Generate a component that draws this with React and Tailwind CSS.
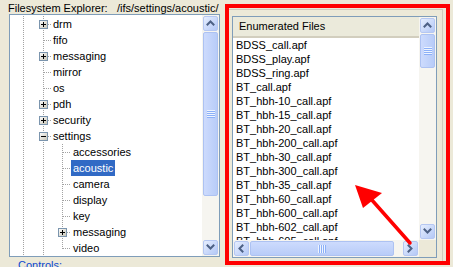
import React from "react";

const treeRows = [
  { t: "drm", lvl: 2, exp: "+" },
  { t: "fifo", lvl: 2 },
  { t: "messaging", lvl: 2, exp: "+" },
  { t: "mirror", lvl: 2 },
  { t: "os", lvl: 2 },
  { t: "pdh", lvl: 2, exp: "+" },
  { t: "security", lvl: 2, exp: "+" },
  { t: "settings", lvl: 2, exp: "-" },
  { t: "accessories", lvl: 3 },
  { t: "acoustic", lvl: 3, sel: true },
  { t: "camera", lvl: 3 },
  { t: "display", lvl: 3 },
  { t: "key", lvl: 3 },
  { t: "messaging", lvl: 3, exp: "+" },
  { t: "video", lvl: 3, last: true },
];

const files = [
  "BDSS_call.apf",
  "BDSS_play.apf",
  "BDSS_ring.apf",
  "BT_call.apf",
  "BT_hbh-10_call.apf",
  "BT_hbh-15_call.apf",
  "BT_hbh-20_call.apf",
  "BT_hbh-200_call.apf",
  "BT_hbh-30_call.apf",
  "BT_hbh-300_call.apf",
  "BT_hbh-35_call.apf",
  "BT_hbh-60_call.apf",
  "BT_hbh-600_call.apf",
  "BT_hbh-602_call.apf",
  "BT_hbh-605_call.apf",
];

const DOT = "#a3a3a3";

function VLine({ x, y1 = 0, y2 = 16 }) {
  return (
    <line x1={x + 0.5} x2={x + 0.5} y1={y1} y2={y2} stroke={DOT} strokeDasharray="1 1" />
  );
}
function HLine({ x1, x2, y = 8 }) {
  return (
    <line x1={x1} x2={x2} y1={y + 0.5} y2={y + 0.5} stroke={DOT} strokeDasharray="1 1" />
  );
}
function ExpBox({ cx, sign }) {
  return (
    <g>
      <defs>
        <linearGradient id="bx" x1="0" y1="0" x2="1" y2="1">
          <stop offset="0" stopColor="#ffffff" />
          <stop offset="1" stopColor="#c6c3b4" />
        </linearGradient>
      </defs>
      <rect x={cx - 4 + 0.5} y={4.5} width={8} height={8} fill="url(#bx)" stroke="#7b95ae" />
      <line x1={cx - 2} x2={cx + 3} y1={8.5} y2={8.5} stroke="#000" />
      {sign === "+" && <line x1={cx + 0.5} x2={cx + 0.5} y1={6} y2={11} stroke="#000" />}
    </g>
  );
}

function TreeRow({ r }) {
  const w = r.lvl === 2 ? 41 : 61;
  return (
    <div className="flex h-[16px] items-center whitespace-nowrap">
      <svg width={w} height={16} shapeRendering="crispEdges" className="shrink-0">
        <VLine x={13} />
        <VLine x={33} />
        {r.lvl === 2 && !r.exp && <HLine x1={34} x2={41} />}
        {r.lvl === 2 && r.exp && (
          <>
            <HLine x1={38} x2={41} />
            <ExpBox cx={33} sign={r.exp} />
          </>
        )}
        {r.lvl === 3 && <VLine x={52} y1={0} y2={r.last ? 9 : 16} />}
        {r.lvl === 3 && !r.exp && <HLine x1={53} x2={61} />}
        {r.lvl === 3 && r.exp && (
          <>
            <HLine x1={57} x2={61} />
            <ExpBox cx={52} sign={r.exp} />
          </>
        )}
      </svg>
      <span
        className={
          "flex h-[16px] items-center px-[2px] " +
          (r.sel ? "bg-[#316ac5] text-white" : "text-black")
        }
      >
        {r.t}
      </span>
    </div>
  );
}

function Chevron({ dir }) {
  const pts = {
    up: "1.5,5.5 4.5,2.5 7.5,5.5",
    down: "1.5,2.5 4.5,5.5 7.5,2.5",
    left: "5.5,1.5 2.5,4.5 5.5,7.5",
    right: "2.5,1.5 5.5,4.5 2.5,7.5",
  }[dir];
  return (
    <svg width="9" height="9" viewBox="0 0 9 9">
      <polyline points={pts} fill="none" stroke="#4d6185" strokeWidth="2" strokeLinecap="square" />
    </svg>
  );
}

function ScrollBtn({ dir }) {
  return (
    <div className="h-[17px] w-[17px] shrink-0 p-[1px]">
      <div className="flex h-full w-full items-center justify-center rounded-[2px] border border-[#b5c7f2] bg-gradient-to-br from-[#e6eefe] to-[#b4c8f6]">
        <Chevron dir={dir} />
      </div>
    </div>
  );
}

function Grip({ vertical }) {
  return vertical ? (
    <svg width="8" height="8" shapeRendering="crispEdges">
      {[0, 2, 4, 6].map((y) => (
        <g key={y}>
          <line x1="0" x2="8" y1={y + 0.5} y2={y + 0.5} stroke="#eef4fe" />
          <line x1="0" x2="8" y1={y + 1.5} y2={y + 1.5} stroke="#8cb0f8" />
        </g>
      ))}
    </svg>
  ) : (
    <svg width="8" height="8" shapeRendering="crispEdges">
      {[0, 2, 4, 6].map((x) => (
        <g key={x}>
          <line y1="0" y2="8" x1={x + 0.5} x2={x + 0.5} stroke="#eef4fe" />
          <line y1="0" y2="8" x1={x + 1.5} x2={x + 1.5} stroke="#8cb0f8" />
        </g>
      ))}
    </svg>
  );
}

export default function App() {
  return (
    <div className="relative flex h-[267px] w-[453px] overflow-hidden bg-[#ece9d8] font-['Liberation_Sans',Arial,sans-serif] text-[11px] leading-none text-black">
      {/* Left column */}
      <div className="flex w-[225px] shrink-0 flex-col">
        <div className="flex h-[16px] items-start whitespace-nowrap pl-[8px] pt-[2px] leading-[12px]">
          <span className="w-[109px] shrink-0">Filesystem Explorer:</span>
          <span>/ifs/settings/acoustic/</span>
        </div>
        <div className="ml-[9px] flex h-[243px] w-[211px] border border-[#7f9db9] bg-white">
          <div className="flex-1 overflow-hidden pt-[1px]">
            {treeRows.map((r, i) => (
              <TreeRow key={i} r={r} />
            ))}
          </div>
          <div className="flex w-[17px] shrink-0 flex-col bg-[#f6f5f0]">
            <ScrollBtn dir="up" />
            <div className="h-[164px] px-[1px]">
              <div className="flex h-full w-full items-center justify-center rounded-[2px] border border-[#adc2f2] bg-gradient-to-r from-[#cddbfd] to-[#b8ccf8]">
                <Grip vertical />
              </div>
            </div>
            <div className="flex-1" />
            <ScrollBtn dir="down" />
          </div>
        </div>
        <div className="pl-[18px] pt-[2px] leading-[12px] text-[#0a48d1]">Controls:</div>
      </div>

      {/* Right: highlighted panel */}
      <div className="mt-[4px] h-[261px] w-[225px] shrink-0 border-4 border-[#ff0000]">
        <div className="mt-[1px] h-[252px] w-[214px] border-r border-t border-[#cfccbc]">
          <div className="ml-[3px] mt-[6px] flex h-[242px] w-[205px] flex-col border border-[#7f9db9] bg-white">
            <div className="flex h-[223px]">
              <div className="flex min-w-0 flex-1 flex-col overflow-hidden">
                <div className="flex h-[21px] shrink-0 items-center border-b-[2px] border-[#d2cebe] bg-[#ebeadb] pl-[6px]">
                  Enumerated Files
                </div>
                <div className="overflow-hidden">
                  {files.map((f) => (
                    <div key={f} className="h-[14px] whitespace-nowrap pl-[3px] leading-[14px]">
                      {f}
                    </div>
                  ))}
                </div>
              </div>
              <div className="flex w-[17px] shrink-0 flex-col bg-[#f6f5f0]">
                <ScrollBtn dir="up" />
                <div className="h-[34px] px-[1px]">
                  <div className="flex h-full w-full items-center justify-center rounded-[2px] border border-[#adc2f2] bg-gradient-to-r from-[#cddbfd] to-[#b8ccf8]">
                    <Grip vertical />
                  </div>
                </div>
                <div className="flex-1" />
                <ScrollBtn dir="down" />
              </div>
            </div>
            <div className="flex h-[17px]">
              <div className="flex flex-1 bg-[#f6f5f0]">
                <ScrollBtn dir="left" />
                <div className="w-[144px] py-[1px]">
                  <div className="flex h-full w-full items-center justify-center rounded-[2px] border border-[#adc2f2] bg-gradient-to-b from-[#cddbfd] to-[#b8ccf8]">
                    <Grip />
                  </div>
                </div>
                <div className="flex-1" />
                <ScrollBtn dir="right" />
              </div>
              <div className="w-[17px] bg-[#ece9d8]" />
            </div>
          </div>
        </div>
      </div>

      {/* Red annotation arrow */}
      <svg className="pointer-events-none absolute left-0 top-0" width="453" height="267">
        <line x1="410" y1="243" x2="371" y2="199" stroke="#ff0000" strokeWidth="3.5" strokeLinecap="round" />
        <polygon points="355,185 363,208 382,193" fill="#ff0000" />
      </svg>
    </div>
  );
}
